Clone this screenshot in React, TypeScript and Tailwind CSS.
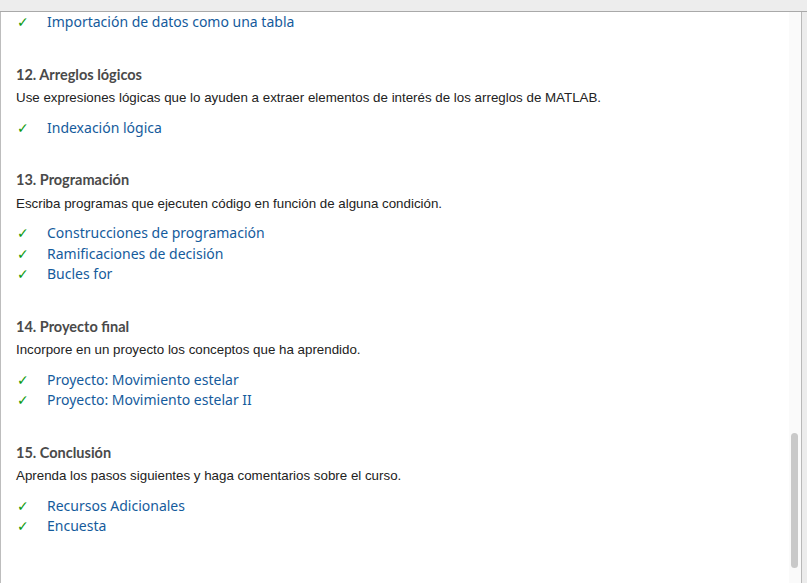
import React from "react";

type Section = { title: string; desc: string; links: string[] };

const sections: Section[] = [
  {
    title: "12. Arreglos lógicos",
    desc: "Use expresiones lógicas que lo ayuden a extraer elementos de interés de los arreglos de MATLAB.",
    links: ["Indexación lógica"],
  },
  {
    title: "13. Programación",
    desc: "Escriba programas que ejecuten código en función de alguna condición.",
    links: ["Construcciones de programación", "Ramificaciones de decisión", "Bucles for"],
  },
  {
    title: "14. Proyecto final",
    desc: "Incorpore en un proyecto los conceptos que ha aprendido.",
    links: ["Proyecto: Movimiento estelar", "Proyecto: Movimiento estelar II"],
  },
  {
    title: "15. Conclusión",
    desc: "Aprenda los pasos siguientes y haga comentarios sobre el curso.",
    links: ["Recursos Adicionales", "Encuesta"],
  },
];

function LinkRow({ text }: { text: string }) {
  return (
    <div className="flex items-center h-[20.5px]">
      <span className="w-[31px] text-[14px] text-[#0f9a0f] font-['DejaVu_Sans',sans-serif] leading-none pl-px">✓</span>
      <span className="text-[14px] text-[#155b9c] font-['Noto_Sans',sans-serif] leading-none">{text}</span>
    </div>
  );
}

export default function App() {
  return (
    <div className="w-[807px] h-[583px] flex flex-col bg-white overflow-hidden">
      <div className="h-[11px] bg-[#ededed] border-b border-[#a9a9a9] shrink-0 box-content" />
      <div className="flex flex-1 min-h-0">
        <div className="flex-1 border-l border-[#bdbdbd] pl-[15px]">
          <div>
            <LinkRow text="Importación de datos como una tabla" />
          </div>
          {sections.map((s, i) => (
            <div key={s.title} className={i === 0 ? "mt-[32.5px]" : "mt-[32.5px]"}>
              <div className="h-[20px] flex items-center text-[14.5px] font-bold text-[#4a4a4a] font-['Lato',sans-serif] leading-none">
                {s.title}
              </div>
              <div className="mt-[3px] h-[20px] flex items-center text-[13.33px] text-[#222] font-['Liberation_Sans',Arial,sans-serif] leading-none">
                {s.desc}
              </div>
              <div className="mt-[9.5px]">
                {s.links.map((l) => (
                  <LinkRow key={l} text={l} />
                ))}
              </div>
            </div>
          ))}
        </div>
        <div className="w-[12px] bg-[#fafafa] flex flex-col pt-[421px]">
          <div className="ml-[2px] w-[7px] h-[135px] rounded-full bg-[#c9c9c9]" />
        </div>
        <div className="w-px bg-[#b8b8b8]" />
        <div className="w-[5px] bg-[#ececec]" />
      </div>
    </div>
  );
}
